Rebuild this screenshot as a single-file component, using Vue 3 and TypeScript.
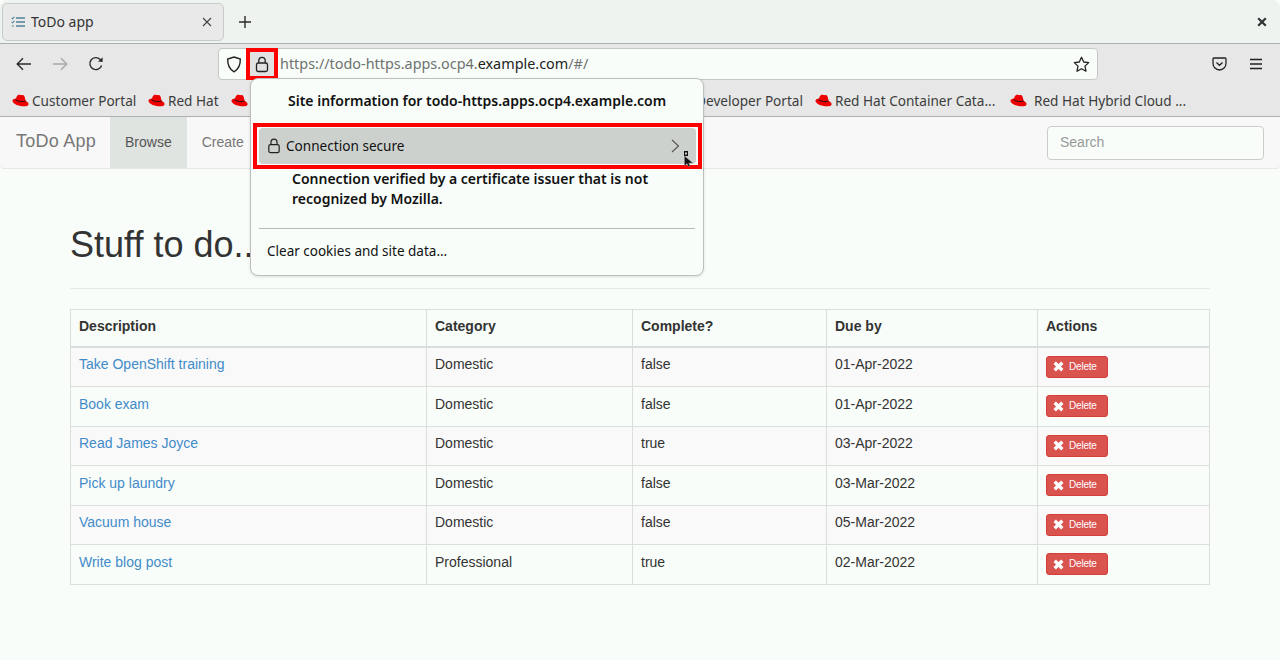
<script setup lang="ts">
interface Bookmark {
  label: string;
  width: number;
}

interface Todo {
  description: string;
  category: string;
  complete: boolean;
  due: string;
}

const bookmarks: Bookmark[] = [
  { label: 'Customer Portal', width: 136 },
  { label: 'Red Hat', width: 83 },
  { label: '', width: 372 },
  { label: 'Developer Portal', width: 212 },
  { label: 'Red Hat Container Cata...', width: 195 },
  { label: 'Red Hat Hybrid Cloud ...', width: 190 },
];

const todos: Todo[] = [
  { description: 'Take OpenShift training', category: 'Domestic', complete: false, due: '01-Apr-2022' },
  { description: 'Book exam', category: 'Domestic', complete: false, due: '01-Apr-2022' },
  { description: 'Read James Joyce', category: 'Domestic', complete: true, due: '03-Apr-2022' },
  { description: 'Pick up laundry', category: 'Domestic', complete: false, due: '03-Mar-2022' },
  { description: 'Vacuum house', category: 'Domestic', complete: false, due: '05-Mar-2022' },
  { description: 'Write blog post', category: 'Professional', complete: true, due: '02-Mar-2022' },
];
</script>

<template>
  <div class="screen">
    <!-- tab strip -->
    <div class="tabstrip">
      <div class="tab">
        <svg class="tab-icon" width="14" height="12" viewBox="0 0 14 12" fill="none" stroke="#4f8296" stroke-width="1.5">
          <path d="M5 2h9M5 6h9M5 10h9" />
          <path d="M.6 1.8l1 1 1.8-2M.6 5.8l1 1 1.8-2M.8 10h2" stroke-width="1.1" />
        </svg>
        <span class="tab-title">ToDo app</span>
        <svg class="tab-close" width="10" height="10" viewBox="0 0 10 10" stroke="#444" stroke-width="1.1"><path d="M1 1l8 8M9 1l-8 8" /></svg>
      </div>
      <svg class="tab-new" width="14" height="14" viewBox="0 0 14 14" stroke="#2b2b2b" stroke-width="1.4"><path d="M7 1v12M1 7h12" /></svg>
      <svg class="win-close" width="10" height="10" viewBox="0 0 10 10" stroke="#2e3436" stroke-width="2.2"><path d="M1.2 1.2l7.6 7.6M8.8 1.2l-7.6 7.6" /></svg>
    </div>

    <!-- nav toolbar -->
    <div class="toolbar">
      <svg class="tool back" width="16" height="14" viewBox="0 0 16 14" fill="none" stroke="#2b2b2b" stroke-width="1.4"><path d="M15 7H1.5M7 1.2L1.2 7 7 12.8" /></svg>
      <svg class="tool forward" width="16" height="14" viewBox="0 0 16 14" fill="none" stroke="#a8aaa8" stroke-width="1.4"><path d="M1 7h13.5M9 1.2L14.8 7 9 12.8" /></svg>
      <svg class="tool reload" width="16" height="16" viewBox="0 0 16 16" fill="none" stroke="#2b2b2b" stroke-width="1.4"><path d="M13.6 9.5A6 6 0 1 1 12.2 3.4L14 5.4" /><path d="M14.6 1.2v4.6H10" fill="#2b2b2b" stroke="none" /></svg>
      <div class="urlbar">
        <svg class="shield" width="16" height="17" viewBox="0 0 16 17" fill="none" stroke="#222" stroke-width="1.4"><path d="M8 1l6.3 2.1c.2 5.8-1.7 10.3-6.3 12.7C3.400 13.400 1.500 8.900 1.700 3.100z" /></svg>
        <div class="lock-box">
          <svg width="14" height="17" viewBox="0 0 14 17" fill="none" stroke="#222" stroke-width="1.3"><rect x="1.500" y="7" width="11" height="8.500" rx="1.800" /><path d="M3.800 7V4.500a3.200 3.200 0 0 1 6.400 0V7" /></svg>
        </div>
        <span class="url"><span class="url-dim">https://todo-https.apps.ocp4.</span>example.com<span class="url-dim">/#/</span></span>
        <svg class="star" width="17" height="17" viewBox="0 0 17 17" fill="none" stroke="#222" stroke-width="1.3" stroke-linejoin="round"><path d="M8.500 1.300l2.200 4.700 5 .6-3.700 3.500 1 5.100-4.500-2.500-4.500 2.500 1-5.100L1.300 6.600l5-.6z" /></svg>
      </div>
      <svg class="pocket" width="15" height="14" viewBox="0 0 15 14" fill="none" stroke="#222" stroke-width="1.300"><path d="M1.900 1h11.200c.5 0 .9.400.9.900v4.400c0 3.700-2.900 6.700-6.500 6.700S1 10 1 6.300V1.900c0-.5.400-.9.900-.9z" /><path d="M4.500 5.500l3 2.800 3-2.800" /></svg>
      <svg class="hamburger" width="14" height="12" viewBox="0 0 14 12" stroke="#222" stroke-width="1.300"><path d="M1 1.500h12M1 6h12M1 10.500h12" /></svg>
    </div>

    <!-- bookmarks -->
    <div class="bookmarks">
      <div v-for="(b, i) in bookmarks" :key="i" class="bookmark" :style="{ width: b.width + 'px' }">
        <svg class="hat" width="17" height="13" viewBox="0 0 17 13">
          <path fill="#ee0000" d="M3.800 6.200C4.400 3.200 4.900 .8 7.200 .8c1.300 0 1.800.6 3.300.3 1.900-.4 2.500 2.200 3 5.600z" />
          <ellipse fill="#ee0000" cx="8.500" cy="8.400" rx="8.300" ry="3.500" transform="rotate(14 8.500 8.400)" />
          <path fill="none" stroke="#111" stroke-width=".9" d="M3.600 5.800c2.600 1.700 7 2.600 10 1.100" />
        </svg>
        <span class="bookmark-label">{{ b.label }}</span>
      </div>
    </div>

    <!-- page content -->
    <nav class="navbar">
      <span class="brand">ToDo App</span>
      <a class="nav-link active">Browse</a>
      <a class="nav-link">Create</a>
      <input class="search" type="text" placeholder="Search" />
    </nav>

    <div class="container">
      <h1 class="page-header">Stuff to do...</h1>
      <table class="todo-table">
        <colgroup>
          <col class="col-desc" />
          <col class="col-cat" />
          <col class="col-done" />
          <col class="col-due" />
          <col />
        </colgroup>
        <thead>
          <tr>
            <th>Description</th>
            <th>Category</th>
            <th>Complete?</th>
            <th>Due by</th>
            <th>Actions</th>
          </tr>
        </thead>
        <tbody>
          <tr v-for="t in todos" :key="t.description">
            <td><a class="todo-link">{{ t.description }}</a></td>
            <td>{{ t.category }}</td>
            <td>{{ t.complete }}</td>
            <td>{{ t.due }}</td>
            <td class="cell-action">
              <button class="btn-delete" type="button">
                <svg width="11" height="11" viewBox="0 0 11 11" stroke="#fff" stroke-width="3.400"><path d="M1.700 1.700l7.600 7.600M9.300 1.700l-7.600 7.600" /></svg>
                <span>Delete</span>
              </button>
            </td>
          </tr>
        </tbody>
      </table>
    </div>

    <!-- site information popup -->
    <div class="popup">
      <div class="popup-title">Site information for todo-https.apps.ocp4.example.com</div>
      <div class="popup-highlight">
        <div class="popup-row">
          <svg width="14" height="16" viewBox="0 0 14 17" fill="none" stroke="#222" stroke-width="1.3"><rect x="1.500" y="7" width="11" height="8.500" rx="1.800" /><path d="M3.800 7V4.500a3.200 3.200 0 0 1 6.400 0V7" /></svg>
          <span class="popup-row-label">Connection secure</span>
          <svg class="chevron" width="9" height="14" viewBox="0 0 9 14" fill="none" stroke="#555" stroke-width="1.100"><path d="M1 1l6.500 6L1 13" /></svg>
        </div>
      </div>
      <p class="popup-note">Connection verified by a certificate issuer that is not recognized by Mozilla.</p>
      <div class="popup-sep"></div>
      <div class="popup-clear">Clear cookies and site data...</div>
      <svg class="cursor" width="12" height="17" viewBox="0 0 12 17">
        <rect x="0" y="0" width="4" height="5" fill="#111" />
        <rect x="1.200" y="1.500" width="1.600" height="2" fill="#fff" />
        <path d="M.5 5v10l2.500-2.400 1.500 3 1.600-.8-1.400-2.800h4z" fill="#111" stroke="#8a8d8a" stroke-width=".5" />
      </svg>
    </div>
  </div>
</template>

<style scoped>
.screen {
  position: relative;
  width: 1280px;
  height: 660px;
  overflow: hidden;
  background: #f8fdf9;
  font-family: "Liberation Sans", Arial, sans-serif;
  font-size: 14px;
  color: #333;
}

/* browser chrome */
.tabstrip {
  height: 43px;
  box-sizing: border-box;
  display: flex;
  align-items: center;
  padding: 3px 13px 3px 2px;
  background: #eff3ef;
  border-radius: 8px 8px 0 0;
  font-family: "Noto Sans", sans-serif;
}

.tab {
  width: 222px;
  height: 38px;
  box-sizing: border-box;
  display: flex;
  align-items: center;
  padding: 0 11px 0 8px;
  background: #e8e9e8;
  border: 1px solid #c8cbc8;
  border-radius: 5px;
}

.tab-title {
  margin-left: 6px;
  flex: 1;
  font-size: 14px;
  color: #333;
}

.tab-new {
  margin-left: 14px;
}

.win-close {
  margin-left: auto;
}

.toolbar {
  height: 42px;
  box-sizing: border-box;
  display: flex;
  align-items: center;
  padding: 0 17px 1px 16px;
  background: #e6e7e6;
  border-top: 1px solid #adb0ad;
}

.tool {
  flex: none;
}

.forward,
.reload {
  margin-left: 20px;
}

.urlbar {
  flex: none;
  width: 880px;
  height: 32px;
  box-sizing: border-box;
  margin-left: 114px;
  display: flex;
  align-items: center;
  background: #f8fdf9;
  border: 1px solid #c6c8c6;
  border-radius: 4px;
  font-family: "Noto Sans", sans-serif;
}

.shield {
  margin-left: 7px;
}

.lock-box {
  width: 32px;
  height: 32px;
  box-sizing: border-box;
  flex: none;
  margin: 0 2px 0 4px;
  display: flex;
  align-items: center;
  justify-content: center;
  background: #e0e1e0;
  border: 4px solid #ff0000;
}

.url {
  flex: 1;
  padding-bottom: 2px;
  font-size: 14.4px;
  color: #222;
}

.url-dim {
  color: #6f726f;
}

.star {
  margin-right: 7px;
}

.pocket {
  margin-left: 114px;
}

.hamburger {
  margin-left: 22px;
}

.bookmarks {
  height: 31px;
  box-sizing: border-box;
  display: flex;
  align-items: center;
  padding: 0 0 1px 12px;
  background: #e6e7e6;
  font-family: "Noto Sans", sans-serif;
  font-size: 13.6px;
}

.bookmark {
  display: flex;
  align-items: center;
  flex: none;
  box-sizing: border-box;
  overflow: hidden;
  white-space: nowrap;
}

.hat {
  flex: none;
}

.bookmark-label {
  margin-left: 3px;
  color: #3c3c3c;
}

.bookmark:nth-child(4) {
  justify-content: flex-end;
  padding-right: 12px;
}

.bookmark:nth-child(4) .hat {
  display: none;
}

.bookmark:nth-child(6) .bookmark-label {
  margin-left: 7px;
}

.navbar {
  height: 53px;
  box-sizing: border-box;
  display: flex;
  align-items: center;
  padding-right: 16px;
  background: #f8f8f8;
  border-top: 1px solid #adb0ad;
  border-bottom: 1px solid #e7e7e7;
  border-radius: 0 0 4px 4px;
}

.brand {
  width: 110px;
  box-sizing: border-box;
  padding: 0 0 2px 16px;
  font-size: 18px;
  letter-spacing: 0.25px;
  color: #777;
}

.nav-link {
  align-self: stretch;
  display: flex;
  align-items: center;
  padding: 0 15px 2px;
  color: #777;
}

.nav-link.active {
  background: #e0e4e0;
  color: #555;
}

.search {
  width: 217px;
  height: 34px;
  box-sizing: border-box;
  margin-left: auto;
  padding: 5px 12px 7px;
  background: #f8fdf9;
  border: 1px solid #ccc;
  border-radius: 4px;
  font: 14px "Liberation Sans", Arial, sans-serif;
}

.search::placeholder {
  color: #999;
}

.container {
  padding: 0 70px;
}

.page-header {
  margin: 56px 0 20px;
  padding-bottom: 23px;
  border-bottom: 1px solid #e6ebe7;
  font-size: 36px;
  font-weight: 500;
  line-height: 1.1;
  color: #333;
}

.todo-table {
  width: 1140px;
  border-collapse: collapse;
  table-layout: fixed;
  line-height: 20px;
}

.col-desc {
  width: 356px;
}

.col-cat {
  width: 206px;
}

.col-done {
  width: 194px;
}

.col-due {
  width: 211px;
}

.todo-table th,
.todo-table td {
  padding: 6px 8px 10px;
  border: 1px solid #dadfdb;
  text-align: left;
  vertical-align: top;
}

.todo-table td {
  padding: 6.5px 8px 9.5px;
}

.todo-table th {
  border-bottom-width: 2px;
  font-weight: bold;
}

.todo-table tbody tr:nth-child(odd) {
  background: #f9f9f9;
}

.todo-link {
  color: #428bca;
}

.btn-delete {
  display: inline-flex;
  align-items: center;
  width: 62px;
  height: 22px;
  margin: 1.5px 0 -1px;
  padding: 0 0 0 6px;
  box-sizing: border-box;
  background: #d9534f;
  border: 1px solid #d43f3a;
  border-radius: 3px;
  color: #fff;
  font: 10px/1 "Liberation Sans", Arial, sans-serif;
  vertical-align: top;
}

.btn-delete span {
  margin-left: 5px;
  letter-spacing: -0.2px;
}

/* popup panel over the page */
.popup {
  position: absolute;
  left: 250px;
  top: 78px;
  width: 454px;
  height: 198px;
  box-sizing: border-box;
  background: #f8fdf9;
  border: 1px solid #bcbfbc;
  border-radius: 8px;
  box-shadow: 0 1px 3px rgba(0, 0, 0, 0.12);
  font-family: "Noto Sans", sans-serif;
  color: #111;
}

.popup-title {
  margin: 12px 0 0 37px;
  height: 20px;
  line-height: 20px;
  font-weight: 600;
  white-space: nowrap;
}

.popup-highlight {
  margin: 12px 1px 0 2px;
  height: 46px;
  box-sizing: border-box;
  border: 4px solid #ff0000;
  padding: 1px 2px;
}

.popup-row {
  height: 36px;
  display: flex;
  align-items: center;
  padding-left: 8px;
  background: #cdd1cd;
  border-radius: 4px;
  font-size: 13.6px;
}

.popup-row-label {
  margin-left: 5px;
  flex: 1;
  position: relative;
  top: -1px;
}

.chevron {
  margin-right: 16px;
}

.popup-note {
  width: 380px;
  margin: 0 0 0 41px;
  padding-top: 0;
  font-weight: 600;
  line-height: 20px;
}

.popup-sep {
  margin: 19px 8px 0;
  border-top: 1px solid #b8bbb8;
}

.popup-clear {
  margin: 12px 0 0 16px;
  line-height: 20px;
  font-size: 13.5px;
}

.cursor {
  position: absolute;
  left: 433px;
  top: 72px;
}
</style>

<style>
html,
body {
  margin: 0;
  background: #f8fdf9;
}
</style>
